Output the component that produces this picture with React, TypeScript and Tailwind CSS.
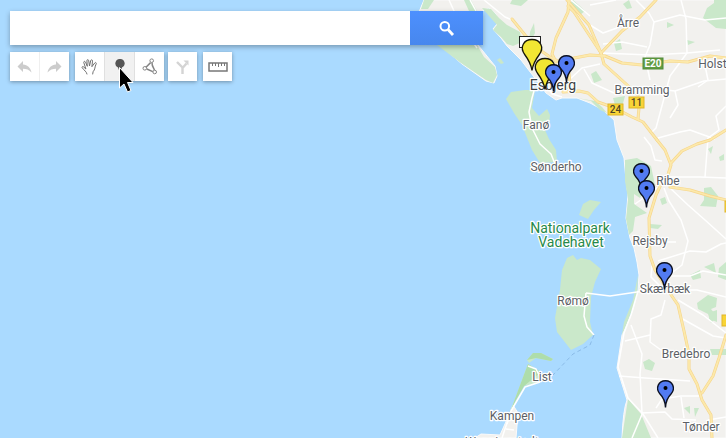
import type { ReactNode } from "react";

type Place = { name: string; x: number; y: number; size?: string };

const places: Place[] = [
  { name: "Årre", x: 628, y: 27 },
  { name: "Holsted", x: 719, y: 68 },
  { name: "Bramming", x: 642, y: 94 },
  { name: "Esbjerg", x: 553, y: 90, size: "text-[14px] fill-[#3c3f43]" },
  { name: "Fanø", x: 536, y: 129 },
  { name: "Sønderho", x: 556, y: 171 },
  { name: "Ribe", x: 668, y: 185 },
  { name: "Rejsby", x: 650, y: 245 },
  { name: "Skærbæk", x: 665, y: 293 },
  { name: "Rømø", x: 573, y: 305 },
  { name: "Bredebro", x: 686, y: 358 },
  { name: "List", x: 542, y: 381 },
  { name: "Kampen", x: 512, y: 420 },
  { name: "Tønder", x: 701, y: 431 },
  { name: "Wenningstedt", x: 502, y: 446 },
];

const bluePins = [
  [566, 63],
  [641, 171],
  [646, 188],
  [664, 270],
  [665, 388],
];

const land = [
  "M419 12 L424 0 H726 V438 H651 L622 438 Q623 410 627 400 L617 368 L622 335 L633 310 L638 290 L639 275 L637 262 L634 248 L630 238 L626 218 L628 195 L626 180 L624 158 L617 140 L614 120 L603 110 L590 103 L577 98 L562 98 L556 100 L546 93 L534 77 L521 60 L507 46 L501 38 L493 29 L497 24 L496 14 L489 8 L480 12 L478 45 L495 66 L497 76 L494 83 L486 81 L462 64 L440 45 Z",
  "M475 438 L481 434 L500 435 L509 415 L513 405 L518 413 L516 438 Z",
];

const woods = [
  "M437 45 H477 L484 57 L495 67 L497 75 L493 83 L486 80 L461 63 Z",
  "M424 0 H434 L428 9 H421 Z",
  "M482 8 L491 9 L499 18 L507 25 L520 32 L522 42 L513 46 L507 44 L501 37 L493 30 L497 25 Z",
  "M464 0 H471 L477 11 H469 Z",
  "M512 0 H528 L521 6 L510 4 Z",
  "M506 99 L511 92 L525 90 L535 90 L532 108 L539 116 L547 109 L550 115 L549 126 L545 130 L549 139 L556 150 L557 162 L540 163 L532 150 L522 125 L514 113 Z",
  "M579 215 L583 204 L590 200 L601 202 L594 210 L588 219 Z",
  "M567 258 L573 255 L577 260 L581 258 L590 260 L601 269 L595 282 L591 297 L590 322 L593 335 L583 344 L571 350 L557 332 L555 318 L560 290 L562 270 Z",
  "M509 415 L519 388 L528 364 L541 372 L540 382 L524 386 L516 400 L511 410 Z",
  "M527 360 L533 353 L541 353 L553 359 L551 361 L536 358 L529 363 Z",
  "M625 160 L637 158 L651 166 L655 185 L645 190 L640 198 L634 194 L634 204 L647 213 L635 217 L633 231 L629 235 L626 219 L628 199 L625 181 Z",
  "M577 98 L591 101 L600 110 L607 113 L602 107 L595 101 Z",
  "M613 98 L625 96 L622 107 L615 105 Z",
  "M628 399 L641 414 L651 438 H622 Z",
  "M638 275 L637 296 L629 318 L622 335 L624 322 L633 300 Z",
  "M530 32 L534 23 L535 33 L529 45 Z",
  "M591 74 L596 71 L602 80 L594 83 Z",
  "M614 43 L620 39 L622 49 L616 51 Z",
  "M567 6 L573 0 L581 7 L585 11 L580 15 Z",
  "M623 4 L629 0 L632 8 L627 9 Z",
  "M707 8 L714 3 V0 H726 V29 L716 28 L703 18 Z",
  "M667 22 L674 25 L667 28 Z",
  "M687 40 L695 42 L688 45 Z",
  "M704 188 L711 187 L718 196 L716 207 L700 206 L704 200 Z",
  "M708 149 L713 146 L711 154 Z",
  "M719 157 L724 154 V160 L720 161 Z",
  "M660 199 L665 197 L667 203 L662 205 Z",
  "M650 224 L662 225 L658 229 L650 228 Z",
  "M690 275 L700 270 L701 278 L693 280 Z",
  "M704 267 L714 263 L716 273 L710 270 Z",
  "M719 268 L726 262 V280 L718 277 Z",
  "M697 303 L708 295 L717 298 L716 307 L711 309 L717 317 L711 323 L708 314 L698 309 Z",
  "M643 362 L649 359 L655 363 L652 371 L645 369 Z",
  "M684 408 L690 406 V414 Z",
  "M694 408 L699 408 L695 417 Z",
  "M711 312 L717 310 V322 L709 319 Z",
  "M710 349 H726 V355 H712 Z",
];

const minorRoads = [
  "M449 0 L459 22 L477 48",
  "M470 0 L476 11",
  "M484 0 L505 17 L512 20",
  "M521 47 L527 58 L540 75 L552 94 L562 97",
  "M568 6 L590 25 L603 33 L617 28",
  "M571 0 L590 16 M590 5 L616 0",
  "M636 0 L649 13 L654 22 L650 45 L645 57 L650 80",
  "M654 22 L680 15 L705 20 L726 18",
  "M681 0 L686 19 L687 53 L670 76 L656 128 L651 133",
  "M601 53 L650 55 L687 53 L720 50",
  "M603 44 L622 42 L647 47",
  "M570 79 L582 68 L600 64",
  "M584 69 L592 83 L614 93",
  "M626 91 L640 87 L675 91 L704 81 L726 79",
  "M675 91 L678 105 L670 118",
  "M703 56 L708 80 L698 87",
  "M658 138 L680 132 L690 130 L715 139",
  "M726 106 L716 116 L719 130 L708 138 L705 177",
  "M668 177 L700 177 L726 178",
  "M644 137 L651 146 L655 160 L662 161",
  "M664 178 L655 190 L635 204",
  "M670 188 L688 205 L705 220 L726 239",
  "M664 188 L669 201 L681 220 L688 241 L682 265 L668 276",
  "M650 242 H676",
  "M658 261 L690 251 L706 252 L721 244 L726 243",
  "M652 266 L651 277 L664 290",
  "M663 276 L690 276 L703 271 L726 275",
  "M637 292 L653 289 L668 290 L697 290 L726 297",
  "M586 293 L610 296 L637 292",
  "M638 291 L631 315 L624 333 L618 367 L628 398 L643 414 L658 438",
  "M665 300 L661 315 L651 319 L650 342 L661 350",
  "M625 341 L650 335 M631 325 L642 354 L640 374 L642 413",
  "M619 376 L645 378 L690 381",
  "M641 413 L665 412 L672 419 L696 420",
  "M656 408 L662 399 L681 396 L701 396",
  "M678 300 L703 315 L726 333",
  "M681 318 L713 336 L726 338",
  "M681 397 L684 418 M708 420 L726 417",
  "M534 91 L532 98 L529 112 L532 128 L540 144 L551 154 L555 164",
  "M586 293 L584 316 L587 327 L594 335",
  "M528 366 L536 369 L540 377 M540 382 L525 387 L518 399 L511 411 L502 438",
  "M506 429 L514 430 M510 415 L507 424",
  "M643 412 L632 438",
];

const mainRoads = [
  "M512 19 L525 35 L537 48 L550 57 L568 66",
  "M569 0 L568 12 L556 38 L552 54 L556 62",
  "M568 6 L574 12 L601 53",
  "M567 0 L589 25 L601 53",
  "M656 0 L640 17 L622 31 L601 53",
  "M569 59 L590 55 L605 56 L622 63 L642 65 L670 61 L688 62 L710 56 L726 58",
  "M601 53 L604 64 L625 83 L638 95",
  "M568 65 L570 83 L563 92 L579 91 L588 93 L598 102 L615 108 L632 117 L643 122 L657 140",
  "M639 108 L638 119",
  "M657 140 L665 150 L671 165 L666 181 L657 185",
  "M671 163 L682 151 L697 144 L710 140 L726 130",
  "M670 187 L690 190 L710 196 L726 200",
  "M662 182 L656 195 L649 218 L650 256 L655 270 L665 286 L678 305 L684 331 L689 354 L689 369 L697 384 L702 400 L711 415 L712 438",
  "M702 393 L713 376 L719 358 L726 335",
];

const toolButton =
  "grid h-[29px] w-[29px] place-items-center text-[#757575] hover:bg-gray-100";
const toolGroup =
  "flex divide-x divide-[#e0e0e0] bg-white shadow-[0_1px_4px_rgba(0,0,0,0.35)]";

function BluePin({ x, y }: { x: number; y: number }) {
  return (
    <g transform={`translate(${x} ${y})`}>
      <path
        d="M.5 19.5 C.1 12 -2 9 -5 6 C-10 0 -6.5 -7.2 .5 -7.2 C7.5 -7.2 11 0 6 6 C3 9 .9 12 .5 19.5Z"
        fill="#527bf2"
        stroke="#0b1022"
        strokeWidth="1.4"
      />
      <circle cx=".5" r="2" fill="#000" />
    </g>
  );
}

function YellowPin({ x, y }: { x: number; y: number }) {
  return (
    <path
      transform={`translate(${x} ${y})`}
      d="M0 21.5 C-1 15 -4 10 -7 6 C-13 -2 -8 -9.5 0 -9.5 C8 -9.5 13 -2 7 6 C4 10 1 15 0 21.5Z"
      fill="#f2e733"
      stroke="#17170a"
      strokeWidth="1.3"
    />
  );
}

function RoadSign({ x, y, width, label, green }: { x: number; y: number; width: number; label?: string; green?: boolean }) {
  return (
    <g>
      <rect
        x={x}
        y={y}
        width={width}
        height="11"
        fill={green ? "#619c43" : "#f8d436"}
        stroke={green ? "#528c38" : "#dfb52b"}
      />
      {label && (
        <text
          x={x + width / 2}
          y={y + 9}
          textAnchor="middle"
          className={green ? "fill-white text-[10px] font-bold" : "fill-[#4d4526] text-[10px] font-medium"}
        >
          {label}
        </text>
      )}
    </g>
  );
}

function MapView() {
  return (
    <svg
      className="h-full w-full font-[Roboto,sans-serif]"
      viewBox="0 0 726 438"
      preserveAspectRatio="xMidYMid slice"
      role="img"
      aria-label="Map"
    >
      <g fill="#f2f1ee" stroke="#fafafa" strokeWidth="1">
        {land.map((d) => <path key={d} d={d} />)}
      </g>
      <g fill="#cae8ca">
        {woods.map((d) => <path key={d} d={d} />)}
      </g>
      <path d="M528 364 L541 372 L524 386 L516 400 L509 415 L519 388Z M527 360 L533 353 L541 353 L553 359 L551 361 L536 358Z" fill="#aeddab" />
      <path d="M497 60 L500 58 L504 63 L501 64Z" fill="#cae8ca" />
      <g fill="none" stroke="#fff" strokeWidth="1.5" strokeLinejoin="round">
        {minorRoads.map((d) => <path key={d} d={d} />)}
      </g>
      <g fill="none" strokeLinejoin="round" strokeLinecap="round">
        {mainRoads.map((d) => <path key={d} d={d} stroke="#f6d58a" strokeWidth="3" />)}
        {mainRoads.map((d) => <path key={d} d={d} stroke="#fce9ab" strokeWidth="1.8" />)}
      </g>
      <path d="M594 335 L590 345 L573 354 L553 375" fill="none" stroke="#8bbbe8" strokeDasharray="4 3" />

      <RoadSign x={643} y={58} width={20} label="E20" green />
      <RoadSign x={629} y={97} width={15} label="11" />
      <RoadSign x={608} y={104} width={15} label="24" />
      <RoadSign x={725} y={201} width={15} />
      <RoadSign x={722} y={315} width={15} />

      <g stroke="#fff" strokeWidth="2.5" strokeLinejoin="round" paintOrder="stroke" textAnchor="middle">
        {places.map((p) => (
          <text key={p.name} x={p.x} y={p.y} className={p.size ?? "fill-[#5c5f66] text-[12px]"}>
            {p.name}
          </text>
        ))}
        <text x="570" y="233" className="fill-[#26894a] text-[14px]">Nationalpark</text>
        <text x="571" y="247" className="fill-[#26894a] text-[14px]">Vadehavet</text>
      </g>

      <rect x="519.5" y="36.5" width="21" height="11" fill="#fff" stroke="#222" />
      <YellowPin x={532} y={49} />
      <YellowPin x={545} y={68} />
      {bluePins.map(([x, y]) => <BluePin key={y} x={x} y={y} />)}
      <BluePin x={553} y={72} />
    </svg>
  );
}

function Tool({ label, active, faded, children }: { label: string; active?: boolean; faded?: boolean; children: ReactNode }) {
  return (
    <button
      type="button"
      aria-label={label}
      aria-pressed={active}
      className={`${toolButton} box-content ${active ? "bg-[#f1f1f1]" : ""} ${faded ? "opacity-50" : ""}`}
    >
      {children}
    </button>
  );
}

function UndoArrow({ flipped }: { flipped?: boolean }) {
  return (
    <svg width="15" height="12" viewBox="0 0 15 12" className={flipped ? "-scale-x-100" : ""} fill="#9a9a9a">
      <path d="M6 0 V3.5 C10.5 4 13.5 6.5 14.5 11.5 C12 8.8 9.5 7.8 6 7.8 V11 L.5 5.5Z" />
    </svg>
  );
}

export default function App() {
  return (
    <main className="relative h-screen w-full overflow-hidden bg-[#aadaff] font-[Roboto,sans-serif]">
      <MapView />

      <div className="absolute top-[11px] left-2.5 flex max-w-full flex-col gap-[7px]">
        <form className="flex h-[34px] w-[473px] max-w-full shadow-[0_2px_5px_rgba(0,0,0,0.3)]" onSubmit={(e) => e.preventDefault()}>
          <input
            type="text"
            aria-label="Search the map"
            className="min-w-0 flex-1 bg-white px-3 text-sm text-gray-800 outline-none"
          />
          <button type="submit" aria-label="Search" className="grid w-[73px] place-items-center bg-linear-to-b from-[#4d90fe] to-[#4787ed]">
            <svg width="16" height="16" viewBox="0 0 16 16" fill="none" stroke="#fff">
              <circle cx="5.8" cy="6.2" r="4.3" strokeWidth="2" />
              <path d="M9 9.5 L14 15" strokeWidth="2.8" />
            </svg>
          </button>
        </form>

        <div className="flex gap-1.5" role="toolbar" aria-label="Map tools">
          <div className={toolGroup}>
            <Tool label="Undo" faded><UndoArrow /></Tool>
            <Tool label="Redo" faded><UndoArrow flipped /></Tool>
          </div>
          <div className="flex gap-1">
            <div className={toolGroup}>
              <Tool label="Pan">
                <svg width="17" height="16" viewBox="0 0 17 16" fill="#fff" stroke="#707070" strokeWidth="1" strokeLinejoin="round" strokeLinecap="round">
                  <path d="M6 15 C5.5 12.5 3.4 11.8 1.2 8.7 C.6 7.8 1.8 7.2 2.6 7.9 L4.9 10 L2.8 3.6 C2.5 2.2 4 1.9 4.5 3.1 L6.3 7.3 L5.9 1.7 C5.9 .3 7.5 .3 7.7 1.7 L8.5 7 L9.7 1.6 C10.1 .3 11.7 .7 11.5 2.1 L10.9 7.7 L13.7 4 C14.5 2.9 15.8 3.9 15.1 5.1 C13.6 7.8 14.3 10.6 12.1 12.7 L11.7 15" />
                </svg>
              </Tool>
              <Tool label="Add marker" active>
                <svg width="10" height="16" viewBox="0 0 10 16" fill="#555">
                  <path d="M5 0 A4.5 4.5 0 0 1 7 8.6 L5 14 L3 8.6 A4.5 4.5 0 0 1 5 0Z" />
                </svg>
              </Tool>
              <Tool label="Draw a line">
                <svg width="16" height="17" viewBox="0 0 16 17" fill="none" stroke="#858585">
                  <path d="M8.6 4.6 L4 9.2 M4.8 11 L10.8 13.6 M10 4.8 C9.8 8 11.2 9.6 12.6 12" strokeWidth="1.5" />
                  <circle cx="9.7" cy="2.7" r="1.8" />
                  <circle cx="2.8" cy="10.3" r="1.8" />
                  <circle cx="12.7" cy="14" r="1.8" />
                </svg>
              </Tool>
            </div>
            <div className={toolGroup}>
              <Tool label="Add directions" faded>
                <svg width="13" height="14" viewBox="0 0 13 14" fill="none" stroke="#aaa" strokeWidth="2.4">
                  <path d="M1 2 L6.5 7.5 V14 M6.5 8 L10.5 3.5" />
                  <path d="M7.5 .5 H12.5 V5.5Z" fill="#aaa" stroke="none" />
                </svg>
              </Tool>
            </div>
          </div>
          <div className={toolGroup}>
            <Tool label="Measure distances and areas">
              <svg width="20" height="10" viewBox="0 0 20 10" fill="#fff" stroke="#777">
                <rect x="1" y="1" width="18" height="8" strokeWidth="1.5" />
                <path d="M4.5 1 V4 M7.5 1 V4 M10.5 1 V5 M13.5 1 V4 M16.5 1 V4" />
              </svg>
            </Tool>
          </div>
        </div>
      </div>

      <svg className="pointer-events-none absolute top-[66px] left-[118px]" width="16" height="28" viewBox="0 0 16 28" aria-hidden="true">
        <path d="M1.5 1.5 V22 L6 18 L9.5 26 L13 24.5 L9.5 16.5 H15 Z" fill="#000" stroke="#fff" />
      </svg>
    </main>
  );
}
